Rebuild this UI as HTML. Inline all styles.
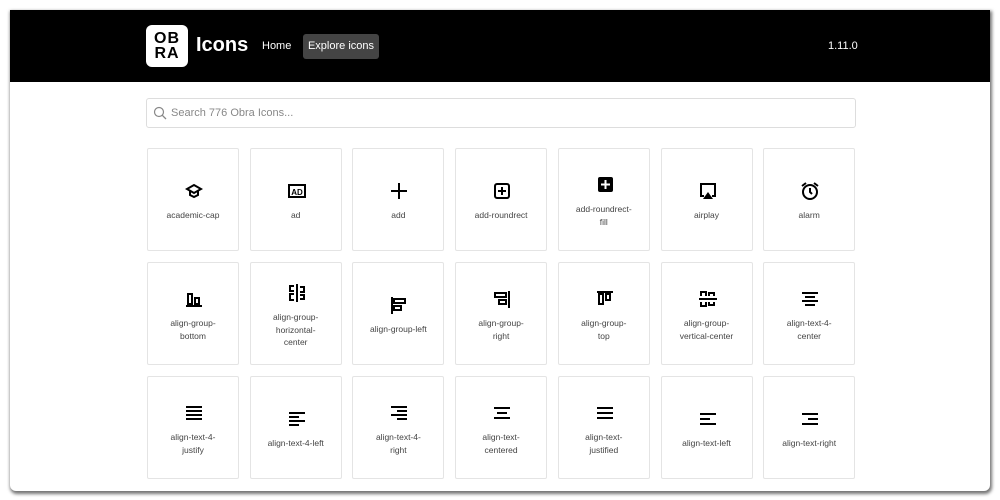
<!DOCTYPE html>
<html><head><style>
*{margin:0;padding:0;box-sizing:border-box}
body{width:1000px;height:500px;background:#fff;font-family:"Liberation Sans",sans-serif;position:relative;overflow:hidden}
.win{position:absolute;left:10px;top:10px;width:980px;height:481px;background:#fff;border-radius:0 0 6px 6px;box-shadow:1px 2px 3px 1px rgba(0,0,0,.55);overflow:hidden}
.hdr{position:absolute;left:0;top:0;width:980px;height:72px;background:#000}
.logo{position:absolute;left:136px;top:15px;width:42px;height:42px;background:#fff;border-radius:6px;color:#000;font-weight:bold;font-size:16px;line-height:15px;text-align:center;padding-top:6px;letter-spacing:1px}
.brand{position:absolute;left:186px;top:24px;color:#fff;font-size:20px;font-weight:bold}
.home{position:absolute;left:252px;top:30px;color:#fff;font-size:11px}
.exp{position:absolute;left:293px;top:24px;width:76px;height:25px;background:#444;border-radius:3px;color:#fff;font-size:11px;line-height:25px;text-align:center}
.ver{position:absolute;left:818px;top:30px;color:#fff;font-size:11px}
.search{position:absolute;left:136px;top:88px;width:710px;height:30px;border:1px solid #ddd;border-radius:3px;color:#888;font-size:11px;line-height:28px;padding-left:24px}
.search svg{position:absolute;left:6px;top:7px}
.card{position:absolute;width:92px;height:103px;border:1px solid #e4e4e4;border-radius:2px;text-align:center}
.card svg{position:absolute;left:36px;top:32px}
.card .t{position:absolute;left:4px;right:4px;top:60px;font-size:8.5px;color:#444;line-height:12.5px}
.card .t2{top:54px}.card .t3{top:48px}
</style></head><body>
<div class="win">
<div class="hdr">
<div class="logo">OB<br>RA</div>
<div class="brand">Icons</div>
<div class="home">Home</div>
<div class="exp">Explore icons</div>
<div class="ver">1.11.0</div>
</div>
<div class="search"><svg width="14" height="14" viewBox="0 0 14 14"><circle cx="6" cy="6" r="4.5" fill="none" stroke="#888" stroke-width="1.2"/><path d="M9.3 9.3L13 13" stroke="#888" stroke-width="1.3"/></svg>Search 776 Obra Icons...</div>
</div>
<div id="g"></div>
<script>
var I=[
['academic-cap','<path d="M3 8l7-4 7 4-7 4z M6 10v4l4 2 4-2v-4" fill="none" stroke="#000" stroke-width="2"/>',1],
['ad','<rect x="2" y="4" width="16" height="12" fill="none" stroke="#000" stroke-width="2"/><text x="10" y="14" font-size="8" font-weight="bold" text-anchor="middle" font-family="Liberation Sans">AD</text>',1],
['add','<path d="M10 2v16M2 10h16" stroke="#000" stroke-width="2"/>',1],
['add-roundrect','<rect x="3" y="3" width="14" height="14" rx="2" fill="none" stroke="#000" stroke-width="2"/><path d="M10 6v8M6 10h8" stroke="#000" stroke-width="2"/>',1],
['add-roundrect-<br>fill','<rect x="3" y="2" width="15" height="15" rx="2"/><path d="M10.5 5v9M6 9.5h9" stroke="#fff" stroke-width="2"/>',2],
['airplay','<path d="M6 15H3V3h14v12h-3" fill="none" stroke="#000" stroke-width="2"/><path d="M10 11l5 7H5z"/>',1],
['alarm','<circle cx="10" cy="11" r="7" fill="none" stroke="#000" stroke-width="2"/><path d="M10 7v4l2 2M2 5l4-3M18 5l-4-3" fill="none" stroke="#000" stroke-width="2"/>',1],
['align-group-<br>bottom','<path d="M2 17h16" stroke="#000" stroke-width="2"/><rect x="4" y="5" width="4" height="10" fill="none" stroke="#000" stroke-width="2"/><rect x="11" y="9" width="4" height="6" fill="none" stroke="#000" stroke-width="2"/>',2],
['align-group-<br>horizontal-<br>center','<path d="M10 1v18" stroke="#000" stroke-width="2"/><path d="M7 3H3v5h4M7 11H3v6h4M13 4h4v5h-4M13 12h4v4h-4" fill="none" stroke="#000" stroke-width="2"/>',3],
['align-group-left','<path d="M3 2v17" stroke="#000" stroke-width="2"/><rect x="5" y="4" width="11" height="4" fill="none" stroke="#000" stroke-width="2"/><rect x="5" y="11" width="7" height="4" fill="none" stroke="#000" stroke-width="2"/>',1],
['align-group-<br>right','<path d="M17 2v17" stroke="#000" stroke-width="2"/><rect x="3" y="4" width="11" height="4" fill="none" stroke="#000" stroke-width="2"/><rect x="7" y="11" width="7" height="4" fill="none" stroke="#000" stroke-width="2"/>',2],
['align-group-<br>top','<path d="M2 3h16" stroke="#000" stroke-width="2"/><rect x="4" y="5" width="4" height="10" fill="none" stroke="#000" stroke-width="2"/><rect x="11" y="5" width="4" height="6" fill="none" stroke="#000" stroke-width="2"/>',2],
['align-group-<br>vertical-center','<path d="M1 10h18" stroke="#000" stroke-width="2"/><path d="M3 7V3h5v4M11 7V4h5v3M3 13v4h5v-4M11 13v3h5v-3" fill="none" stroke="#000" stroke-width="2"/>',2],
['align-text-4-<br>center','<path d="M2 4h16M5 8h10M2 12h16M5 16h10" stroke="#000" stroke-width="2"/>',2],
['align-text-4-<br>justify','<path d="M2 4h16M2 8h16M2 12h16M2 16h16" stroke="#000" stroke-width="2"/>',2],
['align-text-4-left','<path d="M2 4h16M2 8h10M2 12h16M2 16h10" stroke="#000" stroke-width="2"/>',1],
['align-text-4-<br>right','<path d="M2 4h16M8 8h10M2 12h16M8 16h10" stroke="#000" stroke-width="2"/>',2],
['align-text-<br>centered','<path d="M2 5h16M5 10h10M2 15h16" stroke="#000" stroke-width="2"/>',2],
['align-text-<br>justified','<path d="M2 5h16M2 10h16M2 15h16" stroke="#000" stroke-width="2"/>',2],
['align-text-left','<path d="M2 5h16M2 10h10M2 15h16" stroke="#000" stroke-width="2"/>',1],
['align-text-right','<path d="M2 5h16M8 10h10M2 15h16" stroke="#000" stroke-width="2"/>',1]];
var h='';I.forEach(function(a,i){var c=i%7,r=Math.floor(i/7);var x=147+c*102.7,y=148+r*114;
var iy=a[2]==1?32:(a[2]==2?26:20);
h+='<div class="card" style="left:'+x+'px;top:'+y+'px"><svg style="top:'+iy+'px" width="20" height="20" viewBox="0 0 20 20">'+a[1]+'</svg><div class="t t'+a[2]+'">'+a[0]+'</div></div>';});
document.getElementById('g').innerHTML=h;
</script>
</body></html>
